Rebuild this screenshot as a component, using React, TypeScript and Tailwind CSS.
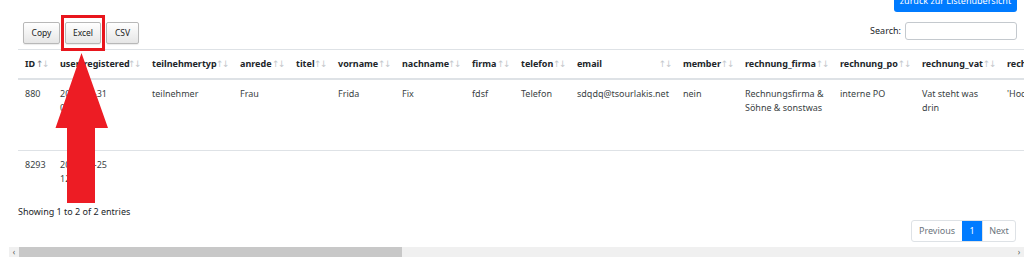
import React from 'react';

interface Column {
  key: string;
  label: string;
  width: string;
}

const columns: Column[] = [
  { key: 'id', label: 'ID', width: 'w-[35px]' },
  { key: 'user_registered', label: 'user_registered', width: 'w-[92px]' },
  { key: 'teilnehmertyp', label: 'teilnehmertyp', width: 'w-[88px]' },
  { key: 'anrede', label: 'anrede', width: 'w-[56px]' },
  { key: 'titel', label: 'titel', width: 'w-[42px]' },
  { key: 'vorname', label: 'vorname', width: 'w-[64px]' },
  { key: 'nachname', label: 'nachname', width: 'w-[70px]' },
  { key: 'firma', label: 'firma', width: 'w-[49px]' },
  { key: 'telefon', label: 'telefon', width: 'w-[56px]' },
  { key: 'email', label: 'email', width: 'w-[104px]' },
  { key: 'member', label: 'member', width: 'w-[62px]' },
  { key: 'rechnung_firma', label: 'rechnung_firma', width: 'w-[95px]' },
  { key: 'rechnung_po', label: 'rechnung_po', width: 'w-[82px]' },
  { key: 'rechnung_vat', label: 'rechnung_vat', width: 'w-[85px]' },
  { key: 'rechnung_adresse', label: 'rechnung_adresse', width: 'w-[110px]' },
];

const rows: Record<string, string>[] = [
  {
    id: '880',
    user_registered: '2019-10-31 09:41:12',
    teilnehmertyp: 'teilnehmer',
    anrede: 'Frau',
    titel: '',
    vorname: 'Frida',
    nachname: 'Fix',
    firma: 'fdsf',
    telefon: 'Telefon',
    email: 'sdqdq@tsourlakis.net',
    member: 'nein',
    rechnung_firma: 'Rechnungsfirma & Söhne & sonstwas',
    rechnung_po: 'interne PO',
    rechnung_vat: 'Vat steht was drin',
    rechnung_adresse: "'Hochschulstraße'",
  },
  {
    id: '8293',
    user_registered: '2020-02-25 12:03:51',
    teilnehmertyp: '',
    anrede: '',
    titel: '',
    vorname: '',
    nachname: '',
    firma: '',
    telefon: '',
    email: '',
    member: '',
    rechnung_firma: '',
    rechnung_po: '',
    rechnung_vat: '',
    rechnung_adresse: '',
  },
];

function SortIcon({ active }: { active?: boolean }) {
  return (
    <span
      className="absolute right-[5px] top-[7px] flex text-[9px] leading-[14px] tracking-[-1.5px] font-normal"
      style={{ fontFamily: '"DejaVu Sans", sans-serif' }}
    >
      <span className={active ? 'text-[#7a828a]' : 'text-[#c4c8cc]'}>↑</span>
      <span className="text-[#c4c8cc]">↓</span>
    </span>
  );
}

function ExportButton({ label, width }: { label: string; width: string }) {
  return (
    <button
      className={`${width} h-[22px] rounded-[2px] border border-[#b8b8b8] bg-gradient-to-b from-[#ffffff] to-[#e6e6e6] text-[8.5px] text-[#222] shadow-[0_1px_1px_rgba(0,0,0,0.08)]`}
    >
      {label}
    </button>
  );
}

export default function App() {
  return (
    <div
      className="relative w-[1024px] h-[272px] overflow-hidden bg-white text-[#212529]"
      style={{ fontFamily: '"Noto Sans", "Open Sans", Arial, sans-serif' }}
    >
      <div className="flex justify-end pr-[7px]">
        <button className="-mt-[10px] h-[22px] w-[123px] rounded-[3px] bg-[#007bff] text-white text-[9px] leading-[14px] whitespace-nowrap">
          zurück zur Listenübersicht
        </button>
      </div>

      <div className="flex items-start justify-between pl-[23px] pr-[7px] mt-[10px]">
        <div className="flex gap-[5px]">
          <ExportButton label="Copy" width="w-[37px]" />
          <ExportButton label="Excel" width="w-[36px]" />
          <ExportButton label="CSV" width="w-[33px]" />
        </div>
        <label className="flex items-center gap-[4px] text-[9px]">
          Search:
          <input className="w-[112px] h-[18px] rounded-[3px] border border-[#c4c9ce] outline-none" />
        </label>
      </div>

      <div className="ml-[18px] mt-[5px] overflow-hidden">
        <table className="table-fixed border-collapse w-max text-[9px] leading-[14px]">
          <thead>
            <tr className="border-t border-[#dee2e6]">
              {columns.map((c, i) => (
                <th
                  key={c.key}
                  className={`${c.width} relative px-[7px] py-[7px] text-left font-bold whitespace-nowrap border-b-2 border-[#dee2e6]`}
                >
                  {c.label}
                  <SortIcon active={i === 0} />
                </th>
              ))}
            </tr>
          </thead>
          <tbody>
            {rows.map((r, ri) => (
              <tr
                key={r.id}
                className={ri > 0 ? 'h-[42px] border-t border-[#dee2e6]' : 'h-[71px]'}
              >
                {columns.map((c) => (
                  <td
                    key={c.key}
                    className={`${c.width} px-[7px] py-[7px] align-top text-[#3a3f44] break-words`}
                  >
                    {r[c.key]}
                  </td>
                ))}
              </tr>
            ))}
          </tbody>
        </table>
      </div>

      <div className="flex items-end justify-between pl-[18px] pr-[8px]">
        <div className="text-[9px] leading-[14px] mb-[23px]">Showing 1 to 2 of 2 entries</div>
        <div className="flex mt-[27px] h-[22px] rounded-[3px] border border-[#dee2e6] text-[9px] overflow-hidden">
          <span className="w-[50px] flex items-center justify-center text-[#6c757d]">Previous</span>
          <span className="w-[20px] flex items-center justify-center bg-[#007bff] text-white">1</span>
          <span className="w-[33px] flex items-center justify-center text-[#6c757d] border-l border-[#dee2e6]">Next</span>
        </div>
      </div>

      <div className="mt-[5px] ml-[9px] h-[10px] flex bg-[#f0f0f0]">
        <span className="w-[10px] flex items-center justify-center text-[8px] text-[#555] leading-none">‹</span>
        <div className="w-[383px] bg-[#c8c8c8]" />
        <div className="flex-1" />
        <span className="w-[10px] flex items-center justify-center text-[8px] text-[#555] leading-none">›</span>
      </div>

      {/* annotation: red frame + arrow pointing at Excel */}
      <div className="absolute left-[61px] top-[15px] w-[44px] h-[36px] border-[3px] border-[#e8161d]" />
      <svg className="absolute left-0 top-0" width="120" height="210" viewBox="0 0 120 210">
        <polygon
          points="81.5,53 108,128 95,128 95,203 67,203 67,128 55.5,128"
          fill="#ed1c24"
        />
      </svg>
    </div>
  );
}
